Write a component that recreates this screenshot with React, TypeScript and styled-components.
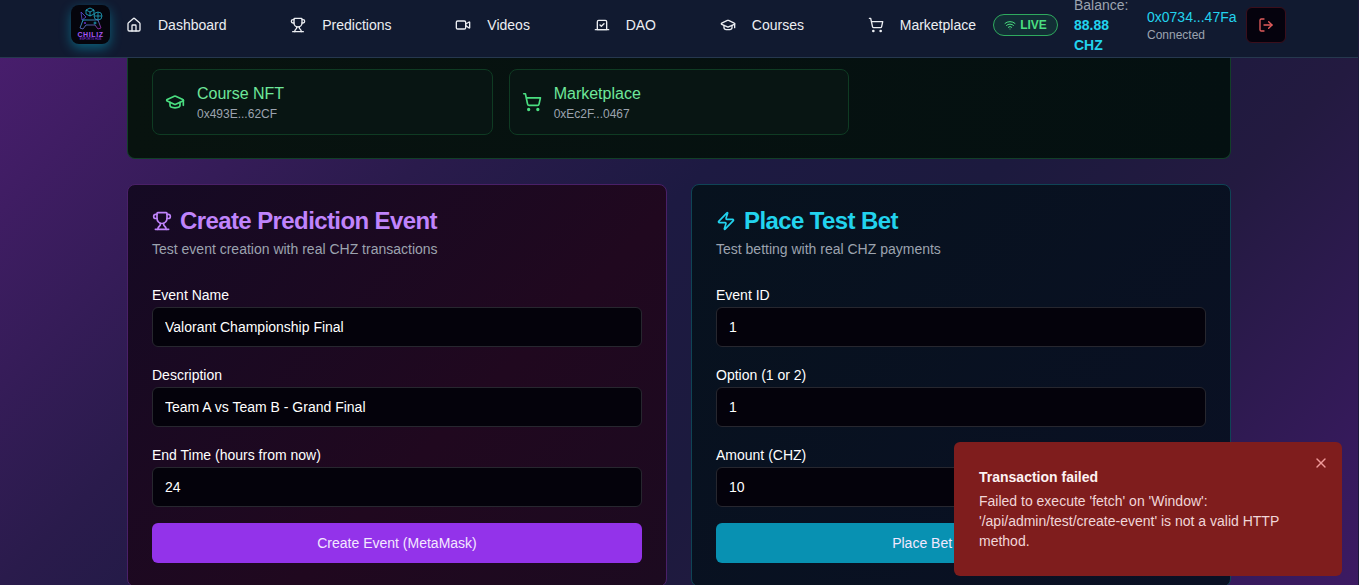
import React from "react";
import styled, { createGlobalStyle } from "styled-components";
import { House, Trophy, Video, Vote, GraduationCap, ShoppingCart, Wifi, LogOut, Zap, X } from "lucide-react";

const Global = createGlobalStyle`
  html, body { margin: 0; height: 585px; overflow: hidden; }
  body { font-family: "Liberation Sans", Arial, sans-serif; color: #fff; background: #1a1a3a; }
  * { box-sizing: border-box; }
`;

const Page = styled.div`
  width: 1359px; height: 585px; overflow: hidden; position: relative; border-right: 1px solid #1c1a38;
  background: linear-gradient(135deg, #4b1e70 0%, #2a1b4c 30%, #1d1a42 45%, #1c1a3e 60%, #231a40 73%, #361a5c 93%, #3c1a62 100%);
`;
const Header = styled.header`
  height: 58px; display: flex; align-items: center; gap: 16px; padding: 0 72px 8px 71px;
  background: #111a30; border-bottom: 1px solid #26384e;
`;
const Logo = styled.div`
  width: 39px; height: 39px; border-radius: 8px; background: #05050c; flex: none;
  box-shadow: 0 4px 12px rgba(6,182,212,.45);
  display: flex; flex-direction: column; align-items: center; padding-top: 2px; overflow: hidden;
`;
const LogoName = styled.span`
  font-size: 7px; line-height: 6px; font-weight: 700; letter-spacing: .6px; color: #a855f7; margin-top: 1px;
`;
const LogoSub = styled.span`
  font-size: 3px; line-height: 3px; color: #9333ea; white-space: nowrap;
`;
const Nav = styled.nav`
  flex: 1; display: flex; justify-content: space-between; align-items: center; padding-right: 1px;
`;
const NavItem = styled.a`
  display: flex; align-items: center; gap: 16px; font-size: 14px; color: #eceef2;
  svg { width: 16px; height: 16px; }
`;
const Live = styled.div`
  width: 65px; height: 22px; flex: none; border: 1px solid #2faa5e; border-radius: 11px; background: rgba(34,197,94,.12);
  display: flex; align-items: center; justify-content: center; gap: 4px; color: #4ade80; font-size: 12px; font-weight: 700;
`;
const Balance = styled.div`
  width: 57px; flex: none; font-size: 14px; line-height: 20px; color: #9ca3af;
  b { color: #22d3ee; font-weight: 700; }
`;
const Wallet = styled.div`
  flex: none; display: flex; flex-direction: column; width: 83px;
`;
const Address = styled.span`
  font-size: 14px; line-height: 20px; color: #22d3ee;
`;
const Connected = styled.span`
  font-size: 12px; line-height: 16px; color: #9ca3af;
`;
const LogoutBtn = styled.button`
  width: 40px; height: 36px; flex: none; padding: 0; border-radius: 6px; background: #05020d; border: 1px solid #3b0f1c;
  color: #e25c5c; display: flex; align-items: center; justify-content: center;
`;
const Main = styled.main`
  width: 1104px; margin: 0 auto;
`;
const ContractsCard = styled.section`
  height: 101px; padding: 11px 24px 0; background: linear-gradient(90deg, #08130f, #041011); border: 1px solid #123f28; border-top: 0;
  border-radius: 0 0 8px 8px; display: grid; grid-template-columns: repeat(3, 1fr); gap: 16px; align-items: start;
`;
const Tile = styled.div`
  height: 66px; padding: 12px; background: #081513; border: 1px solid #0f3b23; border-radius: 8px;
  display: flex; align-items: center; gap: 12px; svg { color: #4ade80; flex: none; }
`;
const TileName = styled.div`
  font-size: 16px; line-height: 24px; color: #6ee79a;
`;
const TileAddr = styled.div`
  font-size: 12px; line-height: 16px; color: #9ca3af;
`;
const Columns = styled.div`
  margin-top: 25px; display: grid; grid-template-columns: 1fr 1fr; gap: 24px;
`;
const Card = styled.section<{ $tone: "purple" | "cyan" }>`
  height: 403px; padding: 24px; border-radius: 8px;
  border: 1px solid ${(p) => (p.$tone === "purple" ? "#4a2068" : "#0f4455")};
  background: ${(p) =>
    p.$tone === "purple"
      ? "linear-gradient(135deg, #150a24 0%, #20081f 60%, #1c0a20 100%)"
      : "linear-gradient(135deg, #07121e 0%, #0a1024 100%)"};
`;
const Title = styled.h3<{ $tone: "purple" | "cyan" }>`
  margin: 0; font-size: 24px; line-height: 24px; font-weight: 700; letter-spacing: -0.6px; display: flex; align-items: center; gap: 8px;
  color: ${(p) => (p.$tone === "purple" ? "#c084fc" : "#22d3ee")};
`;
const Sub = styled.p`
  margin: 6px 0 0; font-size: 14px; line-height: 20px; color: #9ca3af;
`;
const Form = styled.div`
  margin-top: 29px; display: flex; flex-direction: column; gap: 21px;
`;
const Field = styled.div`
  display: flex; flex-direction: column; gap: 5px;
`;
const Label = styled.label`
  font-size: 14px; line-height: 14px; color: #fff;
`;
const Input = styled.input`
  height: 40px; width: 100%; padding: 0 12px; font: 14px "Liberation Sans", Arial, sans-serif; color: #fff;
  background: #04020b; border: 1px solid #27272f; border-radius: 6px; outline: none;
`;
const Submit = styled.button<{ $tone: "purple" | "cyan" }>`
  height: 40px; width: 100%; margin-top: -5px; border: 0; border-radius: 6px; font: 14px "Liberation Sans", Arial, sans-serif; color: #f3e8ff;
  background: ${(p) => (p.$tone === "purple" ? "#9333ea" : "#0891b2")};
`;
const Toast = styled.div`
  position: absolute; left: 954px; top: 442px; width: 388px; height: 134px; padding: 26px 25px 0; background: #7f1d1d; border-radius: 6px;
`;
const ToastTitle = styled.div`
  font-size: 14px; line-height: 18px; font-weight: 700; color: #fef2f2; margin-bottom: 5px;
`;
const ToastText = styled.div`
  font-size: 14px; line-height: 20px; color: #f0d6d8; width: 320px;
`;
const Close = styled.span`
  position: absolute; right: 13px; top: 13px; color: #f09a9a; display: flex;
`;

const nav = [
  { icon: House, label: "Dashboard" },
  { icon: Trophy, label: "Predictions" },
  { icon: Video, label: "Videos" },
  { icon: Vote, label: "DAO" },
  { icon: GraduationCap, label: "Courses" },
  { icon: ShoppingCart, label: "Marketplace" },
];

const LogoMark = () => (
  <svg width="26" height="24" viewBox="0 0 26 24" fill="none" strokeWidth="0.8">
    <defs>
      <linearGradient id="lg" x1="0" y1="0" x2="1" y2="1">
        <stop offset="0" stopColor="#22d3ee" />
        <stop offset="1" stopColor="#a21caf" />
      </linearGradient>
    </defs>
    <path d="M12 1l4 2v4l-4 2-4-2V3zM8 3l4 2 4-2M12 5v4" stroke="#22b8d6" />
    <circle cx="20" cy="9" r="4" stroke="#1fa6c4" />
    <path d="M16 9h8M20 5v8" stroke="#1fa6c4" />
    <path d="M3 5l5 5-4 3z" stroke="#5b4fd8" />
    <path d="M5 13h15l3 8-3 1-3-4H8l-3 4-3-1z" stroke="url(#lg)" />
    <path d="M7 15v2M6 16h2" stroke="#7c3aed" />
    <circle cx="17" cy="16" r="1" stroke="#22b8d6" />
  </svg>
);

export default function App() {
  return (
    <Page>
      <Global />
      <Header>
        <Logo>
          <LogoMark />
          <LogoName>CHILIZ</LogoName>
          <LogoSub>ESPORTS HUB</LogoSub>
        </Logo>
        <Nav>
          {nav.map(({ icon: Icon, label }) => (
            <NavItem key={label}>
              <Icon />
              {label}
            </NavItem>
          ))}
        </Nav>
        <Live>
          <Wifi size={12} />
          LIVE
        </Live>
        <Balance>
          Balance: <b>88.88 CHZ</b>
        </Balance>
        <Wallet>
          <Address>0x0734...47Fa</Address>
          <Connected>Connected</Connected>
        </Wallet>
        <LogoutBtn>
          <LogOut size={16} />
        </LogoutBtn>
      </Header>
      <Main>
        <ContractsCard>
          <Tile>
            <GraduationCap size={20} />
            <div>
              <TileName>Course NFT</TileName>
              <TileAddr>0x493E...62CF</TileAddr>
            </div>
          </Tile>
          <Tile>
            <ShoppingCart size={20} />
            <div>
              <TileName>Marketplace</TileName>
              <TileAddr>0xEc2F...0467</TileAddr>
            </div>
          </Tile>
        </ContractsCard>
        <Columns>
          <Card $tone="purple">
            <Title $tone="purple">
              <Trophy size={20} />
              Create Prediction Event
            </Title>
            <Sub>Test event creation with real CHZ transactions</Sub>
            <Form>
              <Field>
                <Label>Event Name</Label>
                <Input readOnly value="Valorant Championship Final" />
              </Field>
              <Field>
                <Label>Description</Label>
                <Input readOnly value="Team A vs Team B - Grand Final" />
              </Field>
              <Field>
                <Label>End Time (hours from now)</Label>
                <Input readOnly value="24" />
              </Field>
              <Submit $tone="purple">Create Event (MetaMask)</Submit>
            </Form>
          </Card>
          <Card $tone="cyan">
            <Title $tone="cyan">
              <Zap size={20} />
              Place Test Bet
            </Title>
            <Sub>Test betting with real CHZ payments</Sub>
            <Form>
              <Field>
                <Label>Event ID</Label>
                <Input readOnly value="1" />
              </Field>
              <Field>
                <Label>Option (1 or 2)</Label>
                <Input readOnly value="1" />
              </Field>
              <Field>
                <Label>Amount (CHZ)</Label>
                <Input readOnly value="10" />
              </Field>
              <Submit $tone="cyan">Place Bet (MetaMask)</Submit>
            </Form>
          </Card>
        </Columns>
      </Main>
      <Toast>
        <Close>
          <X size={16} />
        </Close>
        <ToastTitle>Transaction failed</ToastTitle>
        <ToastText>Failed to execute 'fetch' on 'Window': '/api/admin/test/create-event' is not a valid HTTP method.</ToastText>
      </Toast>
    </Page>
  );
}
